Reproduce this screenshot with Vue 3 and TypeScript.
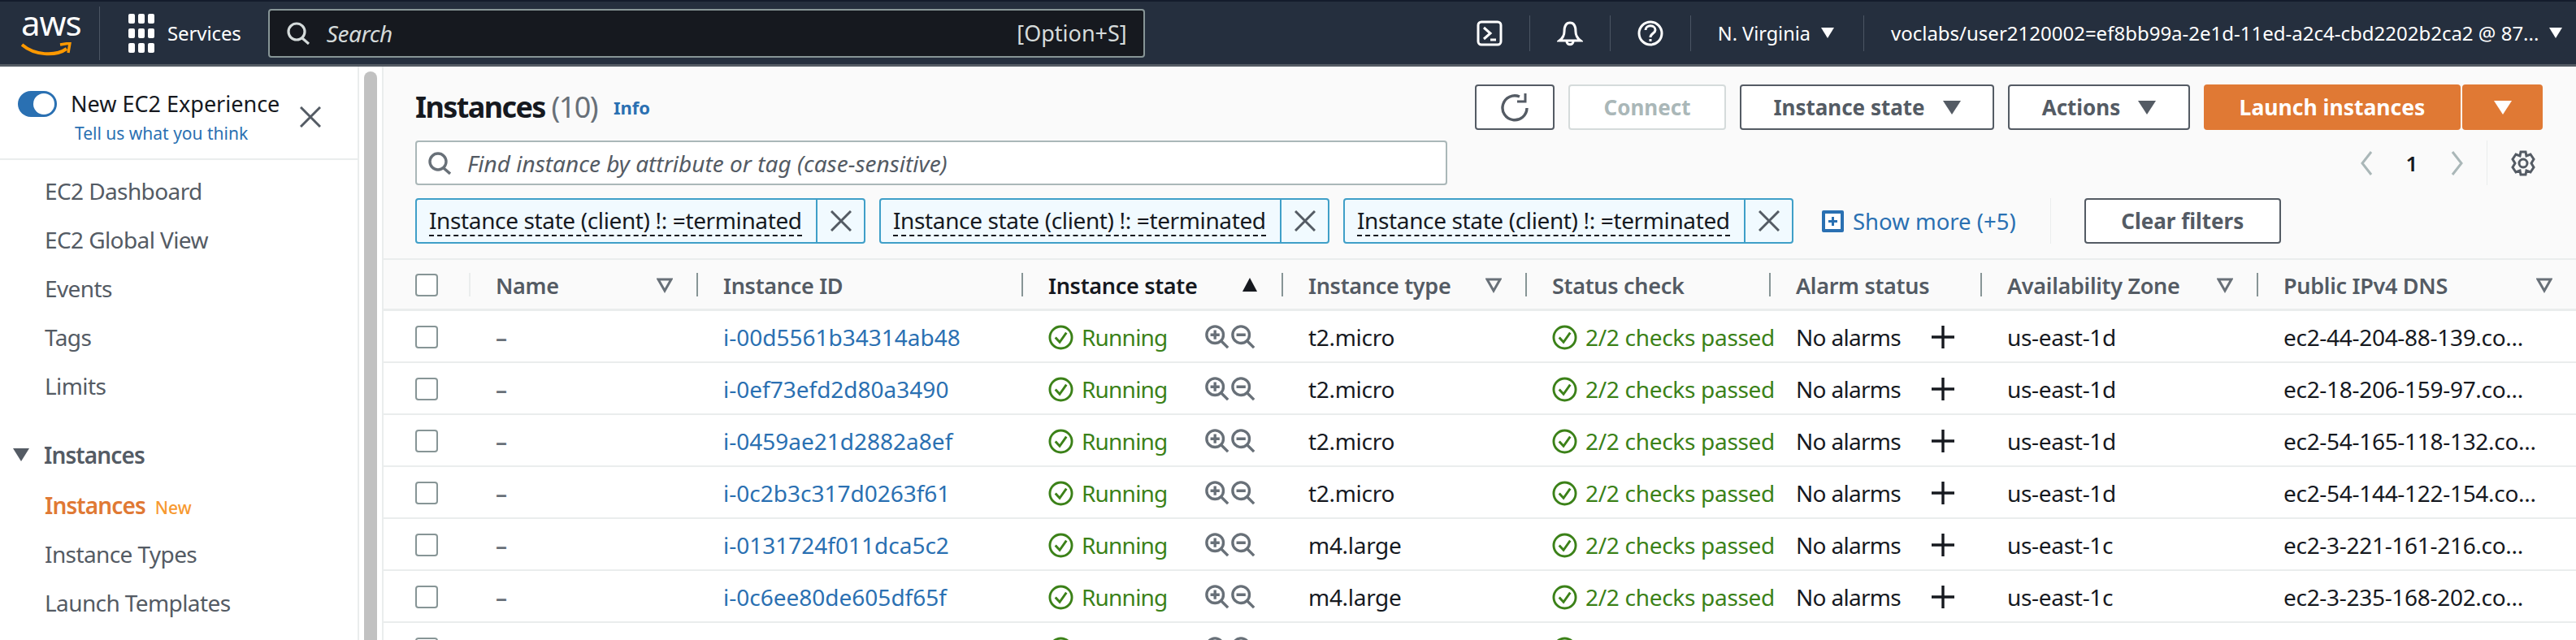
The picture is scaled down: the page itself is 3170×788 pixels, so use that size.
<template>
  <div class="page">
    <!-- Top bar -->
    <header class="topbar">
      <div class="logo">
        <span class="logo-text">aws</span>
        <svg class="smile" viewBox="0 0 62 20" width="62" height="20">
          <path d="M1 3 C16 16 42 18 56 8" fill="none" stroke="#f90" stroke-width="4" />
          <path d="M48 3 L60 1 L58 13" fill="none" stroke="#f90" stroke-width="3.4" />
        </svg>
      </div>
      <span class="top-sep logo-sep"></span>
      <svg class="grid-icon" viewBox="0 0 32 48" width="32" height="48">
        <g fill="#fff">
          <template v-for="y in [0, 18, 36]" :key="y">
            <rect v-for="x in [0, 12, 24]" :key="x" :x="x" :y="y" width="8" height="12" rx="2" />
          </template>
        </g>
      </svg>
      <span class="services">Services</span>
      <div class="top-search">
        <svg viewBox="0 0 28 28" width="28" height="28" fill="none" stroke="#d5dbdb" stroke-width="3.2">
          <circle cx="12" cy="12" r="10" />
          <path d="M19 20 L27 27" />
        </svg>
        <span class="top-search-text">Search</span>
        <span class="top-search-key">[Option+S]</span>
      </div>
      <svg class="top-icon terminal" viewBox="0 0 32 32" width="32" height="32" fill="none" stroke="#fff" stroke-width="3">
        <rect x="2" y="2" width="28" height="28" rx="4" />
        <path d="M9 9 L17 16 L9 23 M17 24 H24" />
      </svg>
      <span class="top-sep"></span>
      <svg class="top-icon" viewBox="0 0 32 32" width="32" height="32" fill="none" stroke="#fff" stroke-width="3">
        <path d="M16 3 C10 3 9 9 9 14 C9 19 7 22 3 25 H29 C25 22 23 19 23 14 C23 9 22 3 16 3 Z" />
        <path d="M12 26 C12 31 20 31 20 26" />
      </svg>
      <span class="top-sep"></span>
      <svg class="top-icon" viewBox="0 0 32 32" width="32" height="32" fill="none" stroke="#fff" stroke-width="3">
        <circle cx="16" cy="16" r="14" />
        <path d="M10 12 C10 5 22 5 22 12 C22 16 16 16 16 21" />
        <path d="M16 23 V26" />
      </svg>
      <span class="top-sep"></span>
      <span class="region">N. Virginia</span>
      <span class="caret-white region-caret"></span>
      <span class="top-sep"></span>
      <span class="account">voclabs/user2120002=ef8bb99a-2e1d-11ed-a2c4-cbd2202b2ca2 @ 87...</span>
      <span class="caret-white account-caret"></span>
    </header>

    <div class="body-row">
      <!-- Side nav -->
      <aside class="sidebar">
        <div class="experience">
          <span class="toggle"><span class="knob"></span></span>
          <div class="experience-text">
            <div class="experience-title">New EC2 Experience</div>
            <div class="experience-link">Tell us what you think</div>
          </div>
          <svg class="experience-close" viewBox="0 0 26 26" width="26" height="26" fill="none" stroke="#545b64" stroke-width="3">
            <path d="M1 1 L25 25 M25 1 L1 25" />
          </svg>
        </div>
        <nav class="nav">
          <a v-for="item in topNav" :key="item" class="nav-item">{{ item }}</a>
          <div class="nav-section"><span class="nav-caret"></span>Instances</div>
          <a class="nav-item active">Instances<span class="nav-new">New</span></a>
          <a class="nav-item">Instance Types</a>
          <a class="nav-item">Launch Templates</a>
        </nav>
      </aside>
      <div class="scrollbar"><div class="scroll-thumb"></div></div>

      <!-- Main -->
      <main class="main">
        <div class="controls">
          <div class="title-row">
            <h1 class="title">Instances <span class="count">(10)</span></h1>
            <a class="info">Info</a>
            <div class="actions">
              <button class="btn refresh">
                <svg viewBox="0 0 36 36" width="36" height="36" fill="none" stroke="#545b64" stroke-width="3.4">
                  <path d="M24 5 A15 15 0 1 0 33 19" />
                  <path d="M31 1 V11 H21" stroke-width="3" />
                </svg>
              </button>
              <button class="btn connect">Connect</button>
              <button class="btn state">Instance state<span class="caret"></span></button>
              <button class="btn act">Actions<span class="caret"></span></button>
              <button class="btn-primary launch">Launch instances</button>
              <button class="btn-primary launch-more"><span class="caret caret-on-orange"></span></button>
            </div>
          </div>

          <div class="search-row">
            <div class="find">
              <svg viewBox="0 0 28 28" width="28" height="28" fill="none" stroke="#687078" stroke-width="3.4">
                <circle cx="12" cy="12" r="10" />
                <path d="M19 20 L27 27" />
              </svg>
              <span class="find-text">Find instance by attribute or tag (case-sensitive)</span>
            </div>
            <div class="pager">
              <svg viewBox="0 0 16 30" width="16" height="30" fill="none" stroke="#aab7b8" stroke-width="3">
                <path d="M14 1 L3 15 L14 29" />
              </svg>
              <span class="page-num">1</span>
              <svg viewBox="0 0 16 30" width="16" height="30" fill="none" stroke="#aab7b8" stroke-width="3">
                <path d="M2 1 L13 15 L2 29" />
              </svg>
              <span class="pager-sep"></span>
              <svg viewBox="0 0 32 32" width="32" height="32" fill="none" stroke="#545b64" stroke-width="3">
                <circle cx="16" cy="16" r="5" />
                <path d="M13 2 H19 L20 7 L25 5 L29 11 L26 16 L29 21 L25 27 L20 25 L19 30 H13 L12 25 L7 27 L3 21 L6 16 L3 11 L7 5 L12 7 Z" />
              </svg>
            </div>
          </div>

          <div class="filter-row">
            <div v-for="n in 3" :key="n" class="chip">
              <span class="chip-label"><span class="chip-text">Instance state (client) !: =terminated</span></span>
              <span class="chip-close">
                <svg viewBox="0 0 26 26" width="26" height="26" fill="none" stroke="#545b64" stroke-width="3">
                  <path d="M1 1 L25 25 M25 1 L1 25" />
                </svg>
              </span>
            </div>
            <a class="show-more">
              <svg viewBox="0 0 27 27" width="27" height="27">
                <rect width="27" height="27" rx="2" fill="#2a70b2" />
                <rect x="4" y="4" width="19" height="19" fill="#fff" />
                <path d="M13.5 8 V19 M8 13.5 H19" stroke="#2a70b2" stroke-width="3" />
              </svg>
              Show more (+5)
            </a>
            <span class="filter-sep"></span>
            <button class="btn clear">Clear filters</button>
          </div>
        </div>

        <!-- Table -->
        <div class="table-head grid">
          <div class="cell check-cell"><span class="checkbox"></span></div>
          <div v-for="col in columns" :key="col.label" class="cell th" :class="{ sorted: col.sorted }">
            <span>{{ col.label }}</span>
            <svg v-if="col.filter" class="filter-tri" viewBox="0 0 20 20" width="20" height="20" fill="none" stroke="#687078" stroke-width="3">
              <path d="M2 3 H18 L10 17 Z" />
            </svg>
            <svg v-if="col.sorted" class="filter-tri" viewBox="0 0 20 20" width="20" height="20">
              <path d="M10 1 L19 18 H1 Z" fill="#16191f" />
            </svg>
          </div>
        </div>
        <div v-for="(row, i) in rows" :key="i" class="table-row grid">
          <div class="cell check-cell"><span class="checkbox"></span></div>
          <div class="cell dash"><template v-if="row.id">–</template></div>
          <div class="cell id-cell"><a class="link">{{ row.id }}</a></div>
          <div class="cell status state-cell">
            <svg viewBox="0 0 32 32" width="31" height="31" fill="none" stroke="#3b8118" stroke-width="3">
              <circle cx="16" cy="16" r="14" />
              <path d="M9 16 L14.5 22 L23 10" />
            </svg>
            <span v-if="row.id" class="running">Running</span>
            <svg class="zoom-in" viewBox="0 0 32 32" width="30" height="30" fill="none" stroke="#687078" stroke-width="3.6">
              <circle cx="13" cy="13" r="11" />
              <path d="M21 21 L30 30 M13 7 V19 M7 13 H19" />
            </svg>
            <svg class="zoom-out" viewBox="0 0 32 32" width="30" height="30" fill="none" stroke="#687078" stroke-width="3.6">
              <circle cx="13" cy="13" r="11" />
              <path d="M21 21 L30 30 M7 13 H19" />
            </svg>
          </div>
          <div class="cell">{{ row.type }}</div>
          <div class="cell status">
            <svg viewBox="0 0 32 32" width="31" height="31" fill="none" stroke="#3b8118" stroke-width="3">
              <circle cx="16" cy="16" r="14" />
              <path d="M9 16 L14.5 22 L23 10" />
            </svg>
            <span v-if="row.id">2/2 checks passed</span>
          </div>
          <div class="cell alarm">
            <span v-if="row.id" class="alarm-text">No alarms</span>
            <svg v-if="row.id" viewBox="0 0 28 28" width="28" height="28" stroke="#16191f" stroke-width="3.4">
              <path d="M14 0 V28 M0 14 H28" />
            </svg>
          </div>
          <div class="cell">{{ row.zone }}</div>
          <div class="cell">{{ row.dns }}</div>
        </div>
      </main>
    </div>
  </div>
</template>

<script setup lang="ts">
interface Column {
  label: string;
  filter?: boolean;
  sorted?: boolean;
}

const topNav = ['EC2 Dashboard', 'EC2 Global View', 'Events', 'Tags', 'Limits'];

const columns: Column[] = [
  { label: 'Name', filter: true },
  { label: 'Instance ID' },
  { label: 'Instance state', sorted: true },
  { label: 'Instance type', filter: true },
  { label: 'Status check' },
  { label: 'Alarm status' },
  { label: 'Availability Zone', filter: true },
  { label: 'Public IPv4 DNS', filter: true },
];

const rows = [
  { id: 'i-00d5561b34314ab48', type: 't2.micro', zone: 'us-east-1d', dns: 'ec2-44-204-88-139.co...' },
  { id: 'i-0ef73efd2d80a3490', type: 't2.micro', zone: 'us-east-1d', dns: 'ec2-18-206-159-97.co...' },
  { id: 'i-0459ae21d2882a8ef', type: 't2.micro', zone: 'us-east-1d', dns: 'ec2-54-165-118-132.co...' },
  { id: 'i-0c2b3c317d0263f61', type: 't2.micro', zone: 'us-east-1d', dns: 'ec2-54-144-122-154.co...' },
  { id: 'i-0131724f011dca5c2', type: 'm4.large', zone: 'us-east-1c', dns: 'ec2-3-221-161-216.co...' },
  { id: 'i-0c6ee80de605df65f', type: 'm4.large', zone: 'us-east-1c', dns: 'ec2-3-235-168-202.co...' },
  // only the top of the icons of this row is in the frame
  { id: '', type: '', zone: '', dns: '' },
];
</script>

<style scoped>
.page {
  width: 3170px;
  height: 788px;
  overflow: hidden;
  font-family: "Noto Sans", "Open Sans", sans-serif;
  font-size: 27px;
  color: #16191f;
  background: #fff;
}

/* top bar */
.topbar {
  height: 82px;
  box-sizing: border-box;
  display: flex;
  align-items: center;
  background: #252f3e;
  border-top: 2px solid #141c2c;
  border-bottom: 3px solid #545b64;
  padding-left: 26px;
  color: #fff;
}
.logo {
  width: 62px;
  height: 62px;
  position: relative;
  flex: none;
}
.logo-text {
  display: block;
  font-size: 42px;
  line-height: 48px;
  margin-top: -6px;
  text-align: center;
  letter-spacing: -1px;
}
.smile {
  position: absolute;
  left: 0;
  top: 42px;
}
.top-sep {
  width: 1px;
  height: 44px;
  background: #4b5563;
  flex: none;
  margin: 0 33px;
}
.logo-sep {
  height: 66px;
  margin: 0 35px 0 34px;
}
.services {
  margin-left: 16px;
  font-size: 24px;
  letter-spacing: -0.1px;
}
.top-search {
  width: 1079px;
  height: 60px;
  box-sizing: border-box;
  margin-left: 33px;
  display: flex;
  align-items: center;
  padding: 0 20px 0 21px;
  background: #16191f;
  border: 2px solid #879596;
  border-radius: 4px;
  color: #d5dbdb;
}
.top-search-text {
  margin-left: 21px;
  font-style: italic;
  font-size: 28px;
  letter-spacing: -0.4px;
}
.top-search-key {
  margin-left: auto;
  font-size: 27px;
}
.top-icon {
  flex: none;
}
.terminal {
  margin-left: 408px;
}
.region {
  font-size: 23.5px;
}
.caret-white {
  width: 0;
  height: 0;
  border-left: 8px solid transparent;
  border-right: 8px solid transparent;
  border-top: 13px solid #fff;
  flex: none;
}
.region-caret {
  margin-left: 13px;
  margin-right: 3px;
}
.account {
  font-size: 24px;
  white-space: nowrap;
}
.account-caret {
  margin-left: 13px;
}

/* layout under the bar */
.body-row {
  display: flex;
  height: 706px;
}
.sidebar {
  width: 440px;
  flex: none;
  border-right: 2px solid #eaeded;
  box-sizing: content-box;
}
.experience {
  height: 115px;
  box-sizing: border-box;
  padding: 30px 0 0 22px;
  display: flex;
  align-items: flex-start;
  border-bottom: 2px solid #eaeded;
}
.toggle {
  width: 48px;
  height: 32px;
  border-radius: 16px;
  background: #2a70b2;
  display: flex;
  align-items: center;
  justify-content: flex-end;
  padding-right: 3px;
  box-sizing: border-box;
  flex: none;
}
.knob {
  width: 26px;
  height: 26px;
  border-radius: 50%;
  background: #fff;
}
.experience-text {
  margin-left: 17px;
  width: 265px;
}
.experience-title {
  font-size: 27px;
  line-height: 32px;
  white-space: nowrap;
}
.experience-link {
  font-size: 21px;
  line-height: 28px;
  color: #2a70b2;
  margin: 6px 0 0 5px;
  white-space: nowrap;
}
.experience-close {
  margin: 19px 0 0 17px;
  flex: none;
}
.nav {
  display: flex;
  flex-direction: column;
  padding-top: 8px;
}
.nav-item {
  height: 60px;
  line-height: 60px;
  padding-left: 55px;
  font-size: 28px;
  letter-spacing: -0.6px;
  color: #545b64;
}
.nav-section {
  margin-top: 23px;
  height: 64px;
  line-height: 64px;
  font-weight: 600;
  font-size: 28px;
  letter-spacing: -0.9px;
  color: #545b64;
  display: flex;
  align-items: center;
  padding-left: 16px;
}
.nav-caret {
  width: 0;
  height: 0;
  border-left: 10px solid transparent;
  border-right: 10px solid transparent;
  border-top: 16px solid #545b64;
  margin-right: 18px;
}
.nav-item.active {
  color: #e07934;
  font-weight: 600;
  letter-spacing: -0.9px;
}
.nav-new {
  margin-left: 12px;
  font-size: 21px;
  font-weight: 500;
  letter-spacing: 0;
  color: #f7992f;
}
.scrollbar {
  width: 30px;
  flex: none;
  padding: 6px 6px 0;
  box-sizing: border-box;
  background: #fff;
  border-right: 2px solid #eaeded;
}
.scroll-thumb {
  width: 16px;
  height: 100%;
  background: #c1c1c1;
  border-radius: 8px 8px 0 0;
}

/* main */
.main {
  flex: 1;
  min-width: 0;
  background: #fafafa;
}
.controls {
  height: 238px;
  box-sizing: border-box;
  padding: 22px 0 0 39px;
  border-bottom: 2px solid #eaeded;
}
.title-row {
  display: flex;
  align-items: center;
  height: 56px;
}
.title {
  margin: 0;
  font-size: 36px;
  font-weight: 700;
  line-height: 56px;
  letter-spacing: -1.6px;
  white-space: nowrap;
}
.count {
  font-weight: 400;
  color: #687078;
}
.info {
  margin-left: 20px;
  font-size: 22px;
  font-weight: 700;
  color: #2a70b2;
}
.actions {
  margin-left: auto;
  display: flex;
  margin-right: 41px;
}
.btn {
  height: 56px;
  box-sizing: border-box;
  font-family: inherit;
  font-size: 26px;
  font-weight: 700;
  color: #545b64;
  background: #fff;
  border: 2px solid #545b64;
  border-radius: 4px;
  padding: 0;
  display: flex;
  align-items: center;
  justify-content: center;
}
.refresh {
  width: 98px;
  margin-right: 17px;
}
.connect {
  width: 194px;
  margin-right: 17px;
  color: #aab7b8;
  border-color: #d5dbdb;
}
.state {
  width: 313px;
  margin-right: 17px;
}
.act {
  width: 224px;
  margin-right: 17px;
}
.caret {
  width: 0;
  height: 0;
  border-left: 11px solid transparent;
  border-right: 11px solid transparent;
  border-top: 17px solid #545b64;
  margin-left: 22px;
}
.caret-on-orange {
  margin-left: 0;
  border-top-color: #fff;
}
.btn-primary {
  height: 56px;
  border: 0;
  border-radius: 4px;
  background: #e07934;
  color: #fff;
  font-family: inherit;
  font-size: 26.5px;
  font-weight: 700;
  padding: 0;
  display: flex;
  align-items: center;
  justify-content: center;
}
.launch {
  width: 316px;
  margin-right: 2px;
}
.launch-more {
  width: 99px;
}
.search-row {
  display: flex;
  align-items: center;
  height: 55px;
  margin-top: 13px;
}
.find {
  width: 1270px;
  height: 55px;
  box-sizing: border-box;
  background: #fff;
  border: 2px solid #aab7b8;
  border-radius: 4px;
  display: flex;
  align-items: center;
  padding-left: 14px;
}
.find-text {
  margin-left: 20px;
  font-size: 28px;
  font-style: italic;
  color: #545b64;
  white-space: nowrap;
}
.pager {
  margin-left: auto;
  display: flex;
  align-items: center;
  margin-right: 49px;
}
.page-num {
  width: 64px;
  margin: 0 16px;
  text-align: center;
  font-weight: 600;
  font-size: 26px;
}
.pager-sep {
  width: 1px;
  height: 55px;
  background: #eaeded;
  margin: 0 28px;
}
.filter-row {
  display: flex;
  align-items: center;
  margin-top: 16px;
  height: 56px;
}
.chip {
  width: 554px;
  height: 56px;
  box-sizing: border-box;
  display: flex;
  margin-right: 17px;
  background: #f1faff;
  border: 2px solid #3f9fc8;
  border-radius: 4px;
  flex: none;
}
.chip-label {
  width: 493px;
  flex: none;
  display: flex;
  align-items: center;
  padding-left: 15px;
  box-sizing: border-box;
  border-right: 2px solid #3f9fc8;
}
.chip-text {
  font-size: 28px;
  letter-spacing: -0.37px;
  line-height: 36px;
  white-space: nowrap;
  border-bottom: 2px dashed #16191f;
}
.chip-close {
  flex: 1;
  display: flex;
  align-items: center;
  justify-content: center;
}
.show-more {
  display: flex;
  align-items: center;
  gap: 11px;
  margin-left: 18px;
  font-size: 27.5px;
  color: #2a70b2;
  white-space: nowrap;
}
.filter-sep {
  width: 1px;
  height: 56px;
  background: #eaeded;
  margin: 0 41px 0 42px;
}
.clear {
  width: 242px;
  flex: none;
}

/* table */
.grid {
  display: grid;
  grid-template-columns: 105px 280px 400px 320px 300px 300px 260px 340px 393px;
}
.table-head {
  height: 63px;
  box-sizing: border-box;
  border-bottom: 3px solid #eaeded;
  background: #fafafa;
}
.table-row {
  height: 64px;
  box-sizing: border-box;
  border-bottom: 2px solid #eaeded;
  background: #fff;
}
.cell {
  display: flex;
  align-items: center;
  padding-left: 33px;
  padding-top: 2px;
  font-size: 28px;
  letter-spacing: -0.3px;
  white-space: nowrap;
  position: relative;
  min-width: 0;
}
.check-cell {
  padding-left: 39px;
}
.checkbox {
  width: 28px;
  height: 28px;
  box-sizing: border-box;
  border: 2px solid #879596;
  border-radius: 4px;
  background: #fff;
}
.th {
  font-weight: 600;
  color: #545b64;
  font-size: 27px;
}
.th::before {
  content: "";
  position: absolute;
  left: 0;
  top: 16px;
  height: 29px;
  width: 2px;
  background: #879596;
}
.table-head .cell:nth-child(2)::before {
  background: #eaeded;
}
.th.sorted {
  color: #16191f;
}
.filter-tri {
  position: absolute;
  right: 29px;
  top: 21px;
}
.dash {
  color: #687078;
  font-weight: 600;
}
.id-cell {
  letter-spacing: 0;
}
.link {
  color: #2a70b2;
}
.status {
  color: #3b8118;
}
.status > svg:first-child {
  margin-right: 10px;
  flex: none;
}
.state-cell {
  padding-right: 32px;
}
.running {
  letter-spacing: -0.8px;
}
.zoom-in {
  margin-left: auto;
  flex: none;
}
.zoom-out {
  margin-left: 2px;
  flex: none;
}
.alarm {
  gap: 38px;
}
.alarm-text {
  letter-spacing: -0.7px;
}
</style>

<style>
html,
body {
  margin: 0;
  overflow: hidden;
}
</style>
